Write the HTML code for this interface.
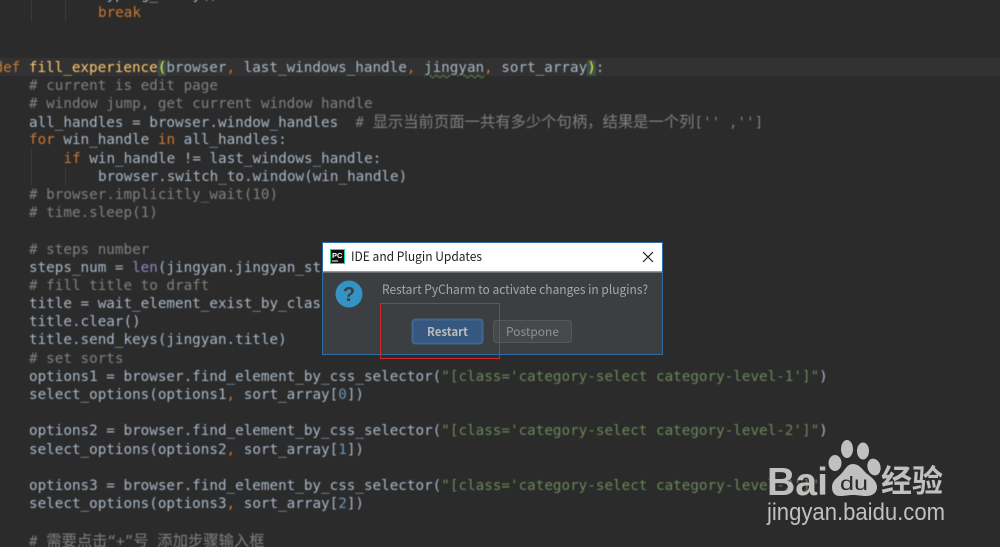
<!DOCTYPE html>
<html><head><meta charset="utf-8"><style>
html,body{margin:0;padding:0;background:#2b2b2b}
#p{position:relative;width:1000px;height:547px;overflow:hidden;background:#2b2b2b}
.cur{position:absolute;left:0;top:58px;width:1000px;height:18px;background:#323232}
.g{position:absolute;width:1px;background:#393939}
#code{position:absolute;left:0;top:1px;filter:blur(.4px);font-family:"DejaVu Sans Mono","Noto Sans CJK SC",monospace;font-size:14.28px;color:#a9b7c6;width:1000px;height:547px}
#code div{position:absolute;white-space:pre;line-height:18px;height:18px;left:29px}
.k{color:#cc7832}.c{color:#808080}.f{color:#ffc66d}.s{color:#6a8759}.n{color:#6897bb}.b{color:#8888c6}
.y{color:#ffef28;background:#3b514d}
.z{font-family:"Noto Sans CJK SC",sans-serif;font-size:15.33px}
.w{text-decoration:underline wavy #5f8a4c 1px;text-underline-offset:2px}
svg{position:absolute;left:0;top:0}
</style></head><body><div id="p">
<div class="cur"></div>
<div class="g" style="left:31px;top:0;height:22px"></div>
<div class="g" style="left:65px;top:0;height:22px"></div>
<div class="g" style="left:31px;top:149px;height:36px"></div>
<div class="g" style="left:65px;top:167px;height:18px"></div>
<div id="code">
<div style="top:-15px;left:98px">typing_delay()</div>
<div style="top:3px;left:98px" class="k">break</div>
<div style="top:58px;left:-5.5px"><span class="k">def</span> <span class="f">fill_experience</span><span class="y">(</span>browser<span class="k">,</span> last_windows_handle<span class="k">,</span> <span class="w">jingyan</span><span class="k">,</span> sort_array<span class="y">)</span>:</div>
<div style="top:76px" class="c"># current is edit page</div>
<div style="top:94px" class="c"># window jump, get current window handle</div>
<div style="top:111px">all_handles = browser.window_handles  <span class="c"># <span class="z">显示当前页面一共有多少个句柄，结果是一个列</span>['' ,'']</span></div>
<div style="top:130px"><span class="k">for</span> win_handle <span class="k">in</span> all_handles:</div>
<div style="top:149px;left:63.500px"><span class="k">if</span> win_handle != last_windows_handle:</div>
<div style="top:167px;left:98px">browser.switch_to.window(win_handle)</div>
<div style="top:185px" class="c"># browser.implicitly_wait(10)</div>
<div style="top:203px" class="c"># time.sleep(1)</div>
<div style="top:240px" class="c"># steps number</div>
<div style="top:258px">steps_num = <span class="b">len</span>(jingyan.jingyan_st</div>
<div style="top:276px" class="c"># fill title to draft</div>
<div style="top:294px">title = wait_element_exist_by_clas</div>
<div style="top:312px">title.clear()</div>
<div style="top:330px">title.send_keys(jingyan.title)</div>
<div style="top:349px" class="c"># set sorts</div>
<div style="top:367px">options1 = browser.find_element_by_css_selector(<span class="s">"[class='category-select category-level-1']"</span>)</div>
<div style="top:385px">select_options(options1<span class="k">,</span> sort_array[<span class="n">0</span>])</div>
<div style="top:421px">options2 = browser.find_element_by_css_selector(<span class="s">"[class='category-select category-level-2']"</span>)</div>
<div style="top:440px">select_options(options2<span class="k">,</span> sort_array[<span class="n">1</span>])</div>
<div style="top:476px">options3 = browser.find_element_by_css_selector(<span class="s">"[class='category-select category-level-3']"</span>)</div>
<div style="top:494px">select_options(options3<span class="k">,</span> sort_array[<span class="n">2</span>])</div>
<div style="top:530px" class="c"># <span class="z">需要点击</span>“+”<span class="z">号</span> <span class="z">添加步骤输入框</span></div>
</div>
<svg width="1000" height="547" viewBox="0 0 1000 547" font-family="'Noto Sans CJK SC','Liberation Sans',sans-serif">
<rect x="322.500" y="242.500" width="340" height="112" fill="#3c3f41" stroke="#2d6ca2"/>
<rect x="323" y="243" width="339" height="29" fill="#fff"/>
<rect x="323" y="271" width="339" height="1.500" fill="#9a9a9a"/>
<rect x="330.500" y="249.500" width="14" height="14" fill="#111" stroke="#21d789" stroke-width="1"/>
<text x="332" y="258" font-size="7.500" font-weight="700" fill="#fff" font-family="'Liberation Sans',sans-serif">PC</text>
<rect x="332" y="260.500" width="6" height="1" fill="#fff"/>
<text x="351" y="261" font-size="12.500" fill="#222" textLength="131" lengthAdjust="spacingAndGlyphs">IDE and Plugin Updates</text>
<path d="M643 252L653 262M653 252L643 262" stroke="#222" stroke-width="1.200" fill="none"/>
<circle cx="349" cy="294" r="13.500" fill="#3592c4"/>
<text x="349" y="301" font-size="20" font-weight="700" fill="#3c3f41" text-anchor="middle" font-family="'Liberation Sans',sans-serif">?</text>
<text x="382" y="294" font-size="12.500" fill="#a5a8aa" textLength="266" lengthAdjust="spacingAndGlyphs">Restart PyCharm to activate changes in plugins?</text>
<rect x="412.500" y="319.500" width="70" height="24" rx="3" fill="#365880" stroke="#41668f" stroke-width="2"/>
<text x="427" y="336" font-size="12" font-weight="700" fill="#bbbbbb" textLength="41" lengthAdjust="spacingAndGlyphs">Restart</text>
<rect x="493.500" y="320.500" width="78" height="22" rx="3" fill="#45494a" stroke="#54585a"/>
<text x="506" y="336" font-size="12" fill="#8f9293" textLength="53" lengthAdjust="spacingAndGlyphs">Postpone</text>
<rect x="380.500" y="303.500" width="119" height="55" fill="none" stroke="#d0282c" stroke-width="1"/>
<g fill="#c0c0c0" font-family="'Liberation Sans',sans-serif">
<text x="767" y="495" font-size="39" font-weight="700" textLength="61" lengthAdjust="spacingAndGlyphs">Bai</text>
<ellipse cx="847" cy="449" rx="6" ry="9"/>
<ellipse cx="863" cy="451" rx="6" ry="8.500"/>
<ellipse cx="835" cy="463" rx="6.500" ry="8"/>
<ellipse cx="874" cy="467" rx="6.500" ry="8.500" transform="rotate(-15 874 467)"/>
<path d="M853 464c6 0 9 5 13 9c5 4 11 8 11 14c0 7-6 9-11 9c-5 0-8-1-13-1c-5 0-8 1-13 1c-5 0-8-3-8-9c0-6 5-9 9-13c4-4 6-10 12-10z"/>
<text x="840" y="490" font-size="19" fill="#2b2b2b" textLength="28" lengthAdjust="spacingAndGlyphs">du</text>
<text x="881" y="492" font-size="31" font-weight="700" font-family="'Noto Sans CJK SC',sans-serif" textLength="62" lengthAdjust="spacingAndGlyphs">经验</text>
<text x="767" y="520" font-size="24" textLength="178" lengthAdjust="spacingAndGlyphs">jingyan.baidu.com</text>
</g>
</svg>
</div></body></html>
